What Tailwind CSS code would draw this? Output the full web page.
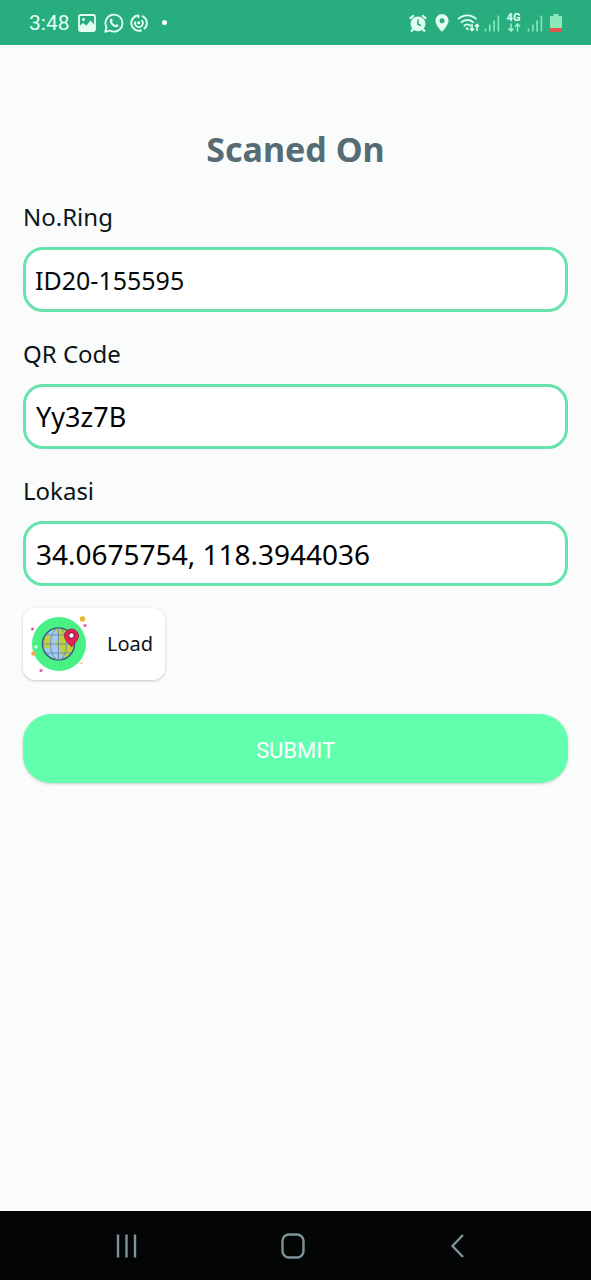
<!DOCTYPE html>
<html lang="id">
<head>
<meta charset="utf-8">
<meta name="viewport" content="width=device-width, initial-scale=1">
<title>Scaned On</title>
<script src="https://cdn.jsdelivr.net/npm/@tailwindcss/browser@4"></script>
</head>
<body class="flex min-h-screen flex-col bg-[#fafcfb] font-['Noto_Sans',sans-serif] text-[#0b1518]">
  <header class="flex h-[45px] items-center justify-between bg-[#27ad7e] pr-[29px] pl-[29px] text-[#e2fff2]">
    <div class="flex items-center gap-2">
      <span class="font-[Roboto,sans-serif] text-[21px] leading-6">3:48</span>
      <svg class="h-[18px] w-[18px]" viewBox="0 0 18 18" fill="none" aria-hidden="true">
        <rect x="1" y="1" width="16" height="16" rx="1.5" stroke="currentColor" stroke-width="1.8"/>
        <circle cx="5.5" cy="5.5" r="1.5" fill="currentColor"/>
        <path d="M1.500 12l3.500-3 3.500 2.500 4-5 4.500 5V17h-15.500z" fill="currentColor"/>
      </svg>
      <svg class="h-5 w-5" viewBox="0 0 20 20" fill="none" aria-hidden="true">
        <path d="M1.200 18.800l1.300-4.600A8.500 8.500 0 1 1 5.700 17.500z" stroke="currentColor" stroke-width="1.8" stroke-linejoin="round"/>
        <path d="M6.200 6.200c.8-1 1.600-.9 1.900-.2l.6 1.500c.2.600-.8 1.200-.6 1.600.7 1.300 1.600 2.200 2.900 2.800.5.200 1-.9 1.600-.7l1.600.8c.6.400.4 1.200-.3 1.800-3.400 2.400-9.700-4-7.700-7.600z" fill="currentColor"/>
      </svg>
      <svg class="-ml-[2px] h-[18px] w-[18px]" viewBox="0 0 18 18" fill="none" stroke="currentColor" stroke-width="2" aria-hidden="true">
        <path d="M12 1.800A7.800 7.800 0 0 1 14 15M11.800 16.300A7.800 7.800 0 1 1 8.500 1.200"/>
        <path d="M5.600 7.500A3.800 3.800 0 1 0 11.500 6.300M8.500 1v3" stroke-width="1.800"/>
        <circle cx="8.700" cy="8.700" r="1.500" fill="currentColor" stroke="none"/>
      </svg>
      <span class="ml-[6px] h-[5px] w-[5px] rounded-full bg-white"></span>
    </div>
    <div class="flex items-center">
      <svg class="h-[18px] w-[18px]" viewBox="0 0 18 18" fill="none" aria-hidden="true">
        <circle cx="9" cy="9.800" r="7.400" fill="currentColor"/>
        <path d="M.8 4.800L4.800 1.200M17.200 4.800L13.200 1.200M4.500 15L2 17.500M13.500 15l2.500 2.500" stroke="currentColor" stroke-width="2.200"/>
        <path d="M9 5.500v4.700l3 1.500" stroke="#27ad7e" stroke-width="1.600"/>
      </svg>
      <svg class="ml-2 h-[18px] w-[14px]" viewBox="0 0 14 18" aria-hidden="true">
        <path fill="currentColor" fill-rule="evenodd" d="M7 0a6.600 6.600 0 0 1 6.600 6.600C13.600 11.200 7 18 7 18S.4 11.200.4 6.600A6.600 6.600 0 0 1 7 0zm0 4.200a2.500 2.500 0 1 0 0 5 2.500 2.500 0 0 0 0-5z"/>
      </svg>
      <svg class="ml-2 h-[18px] w-[23px]" viewBox="0 0 23 18" fill="none" stroke="currentColor" stroke-width="1.800" aria-hidden="true">
        <path d="M1 5.200c5.500-5 13-5 18.500 0M3.800 8.600c4-3.500 9-3.500 13 0M6.800 12c2.200-2 4.700-2 6.900 0"/>
        <path d="M8.300 14l2 2.500 1.500-1.500-1.500-1.800z" fill="currentColor" stroke="none"/>
        <path d="M15 10v6.500M13 14.500l2 2.200 2-2.200M20 17v-6.500M18 12.500l2-2.200 2 2.200" stroke-width="1.500"/>
      </svg>
      <svg class="ml-1 h-[18px] w-4 text-[#82e8b8]" viewBox="0 0 16 18" stroke="currentColor" stroke-width="1.700" aria-hidden="true">
        <path d="M1.500 17.500v-3M5.800 17.500v-7M10.100 17.500v-11M14.400 17.500v-16"/>
      </svg>
      <div class="ml-[6px] flex w-[15px] flex-col items-center">
        <span class="font-[Roboto,sans-serif] text-[11px] leading-[10px] font-bold">4G</span>
        <svg class="h-[9px] w-[14px] text-[#a4f5cf]" viewBox="0 0 14 9" fill="none" stroke="currentColor" stroke-width="1.500" aria-hidden="true">
          <path d="M4 .5v7.500M1.500 5.500L4 8l2.500-2.500M10.500 8.500V1M8 3.500L10.500 1 13 3.500"/>
        </svg>
      </div>
      <svg class="ml-[6px] h-[18px] w-4 text-[#82e8b8]" viewBox="0 0 16 18" stroke="currentColor" stroke-width="1.700" aria-hidden="true">
        <path d="M1.500 17.500v-3M5.800 17.500v-7M10.100 17.500v-11M14.400 17.500v-16"/>
      </svg>
      <svg class="ml-[7px] h-[18px] w-3" viewBox="0 0 12 18" aria-hidden="true">
        <path d="M3.500 0h5v2H12v16H0V2h3.500z" fill="#8ce9b9"/>
        <path d="M0 14h12v4H0z" fill="#e3554f"/>
      </svg>
    </div>
  </header>

  <main class="flex flex-1 flex-col px-[23px] pt-20">
    <h1 class="text-center text-[34px] leading-[48px] font-bold text-[#566c75]">Scaned On</h1>
    <form class="mt-7 flex flex-col" onsubmit="return false">
      <label for="ring" class="text-[24px] leading-8">No.Ring</label>
      <input id="ring" type="text" value="ID20-155595" class="mt-[14px] h-[65px] w-full rounded-[20px] border-3 border-[#68e3ab] bg-white px-[9px] text-[25px] text-[#050b0d] outline-none">
      <label for="qr" class="mt-[26px] text-[24px] leading-8">QR Code</label>
      <input id="qr" type="text" value="Yy3z7B" class="mt-[14px] h-[65px] w-full rounded-[20px] border-3 border-[#68e3ab] bg-white px-[10px] text-[27px] text-black outline-none">
      <label for="lokasi" class="mt-[26px] text-[24px] leading-8">Lokasi</label>
      <input id="lokasi" type="text" value="34.0675754, 118.3944036" class="mt-[14px] h-[65px] w-full rounded-[20px] border-3 border-[#68e3ab] bg-white px-[10px] text-[28px] text-black outline-none">

      <button type="button" class="mt-[22px] flex h-[72px] items-center gap-[18px] self-start rounded-[12px] bg-white pr-3 pl-[6px] text-[20px] shadow-[0_1px_3px_rgba(0,0,0,0.22)]">
        <svg class="h-[60px] w-[60px]" viewBox="0 0 60 60" fill="none" aria-hidden="true">
          <circle cx="30" cy="30" r="27" fill="#49f184"/>
          <circle cx="29.500" cy="30" r="16" fill="#a4c9f5"/>
          <path d="M26 15l7-.5 7 3 5 9-.5 8-4 6-4 3-4-3-1-6-5-3 1-5 4-3-3-3zM15 25l4-5 3 3-2 5 2 4-3 3-5-3z" fill="#c4cf3c"/>
          <circle cx="29.500" cy="30" r="16" stroke="#34597b" stroke-width="1.500"/>
          <path d="M29.500 14v32M14 30h31M17 21h25M17 39h25" stroke="#6b93a0" stroke-width="1"/>
          <ellipse cx="29.500" cy="30" rx="8" ry="16" stroke="#6b93a0" stroke-width="1"/>
          <path d="M42.500 33c-3-4-7-7-7-11a7 7 0 0 1 14 0c0 4-4 7-7 11z" fill="#e91e58" stroke="#94304e" stroke-width="1"/>
          <circle cx="42.500" cy="21.500" r="2.800" fill="#fff" stroke="#8b2449" stroke-width="1.200"/>
          <circle cx="53.500" cy="5" r="2.800" fill="#e9b52f"/>
          <circle cx="56" cy="11.500" r="1.600" fill="#e45bb0"/>
          <circle cx="3.500" cy="15" r="1.600" fill="#e45bb0"/>
          <circle cx="12" cy="56.500" r="1.600" fill="#e45bb0"/>
          <circle cx="4.500" cy="39.500" r="2.200" fill="#f2a94e"/>
          <circle cx="52.500" cy="49" r="1.200" fill="#f5c7a0"/>
          <circle cx="7" cy="33" r="1.800" fill="#d5ffe2"/>
        </svg>
        <span>Load</span>
      </button>

      <button type="submit" class="mt-[34px] h-[69px] w-full rounded-[28px] bg-[#62ffae] pt-[3px] font-[Roboto,sans-serif] text-[22px] text-white shadow-[0_1px_3px_rgba(0,0,0,0.2)]">SUBMIT</button>
    </form>
  </main>

  <nav class="grid h-[69px] grid-cols-[1fr_70px_1fr] items-center bg-[#040606] pr-1 text-[#7d949c]" aria-label="Navigasi">
    <button type="button" aria-label="Recent" class="justify-self-center">
      <svg class="h-7 w-7" viewBox="0 0 28 28" stroke="currentColor" stroke-width="2.400" aria-hidden="true"><path d="M3 2.500v23M11.500 2.500v23M20 2.500v23"/></svg>
    </button>
    <button type="button" aria-label="Home" class="justify-self-center">
      <svg class="h-7 w-7" viewBox="0 0 28 28" fill="none" stroke="currentColor" stroke-width="2.400" aria-hidden="true"><rect x="2.500" y="2.500" width="21" height="23" rx="6.500"/></svg>
    </button>
    <button type="button" aria-label="Back" class="justify-self-center">
      <svg class="h-7 w-7" viewBox="0 0 28 28" fill="none" stroke="currentColor" stroke-width="2.400" aria-hidden="true"><path d="M19 3L8.500 14 19 25"/></svg>
    </button>
  </nav>
</body>
</html>
